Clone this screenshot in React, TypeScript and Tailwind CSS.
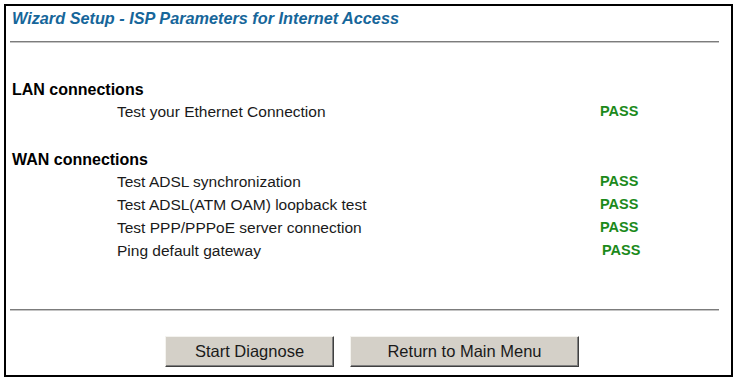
const tests = [
  { label: "Test ADSL synchronization", shift: "" },
  { label: "Test ADSL(ATM OAM) loopback test", shift: "" },
  { label: "Test PPP/PPPoE server connection", shift: "" },
  { label: "Ping default gateway", shift: "ml-[2px]" },
];

function Pass({ shift }: { shift?: string }) {
  return <span className={`text-[14.5px] font-bold text-[#1b8a1b] ${shift ?? ""}`}>PASS</span>;
}

function TestRow({ label, h, shift }: { label: string; h: string; shift?: string }) {
  return (
    <div className={`flex items-center ${h}`}>
      <span className="w-[594px] pl-[111px] text-[15.5px] text-[#1a1a1a]">{label}</span>
      <Pass shift={shift} />
    </div>
  );
}

function Divider() {
  return <div className="ml-[4px] mr-[12px] h-[2px] border-t border-b border-t-[#7c7c7c] border-b-[#c4c4c4]" />;
}

function WinButton({ children, w }: { children: string; w: string }) {
  return (
    <button
      className={`${w} h-[31px] bg-[#d4d0c8] text-[16.5px] text-[#1a1a1a] border border-t-[#f4f3ef] border-l-[#f4f3ef] border-r-[#404040] border-b-[#404040] shadow-[inset_-1px_-1px_0_#808080]`}
    >
      {children}
    </button>
  );
}

export default function App() {
  return (
    <div
      className="w-[737px] h-[379px] bg-white pt-[4px] pl-[4px]"
      style={{ fontFamily: '"Liberation Sans", Arial, sans-serif' }}
    >
      <div className="w-[729px] h-[373px] border-2 border-black flex flex-col">
        <div className="h-[24px] leading-[24px] pl-[6px] text-[16.25px] font-bold italic text-[#16669a]">
          Wizard Setup - ISP Parameters for Internet Access
        </div>
        <div className="mt-[11px]">
          <Divider />
        </div>

        <div className="mt-[37px] h-[20px] leading-[20px] pl-[6px] text-[16px] font-bold text-black">
          LAN connections
        </div>
        <div className="mt-[2px]">
          <TestRow label="Test your Ethernet Connection" h="h-[20px]" />
        </div>

        <div className="mt-[28px] h-[20px] leading-[20px] pl-[6px] text-[16px] font-bold text-black">
          WAN connections
        </div>
        <div className="flex flex-col">
          {tests.map((t) => (
            <TestRow key={t.label} label={t.label} shift={t.shift} h="h-[23px]" />
          ))}
        </div>

        <div className="mt-[47px]">
          <Divider />
        </div>

        <div className="mt-[25px] flex gap-[16px] pl-[159px]">
          <WinButton w="w-[169px]">Start Diagnose</WinButton>
          <WinButton w="w-[229px]">Return to Main Menu</WinButton>
        </div>
      </div>
    </div>
  );
}
